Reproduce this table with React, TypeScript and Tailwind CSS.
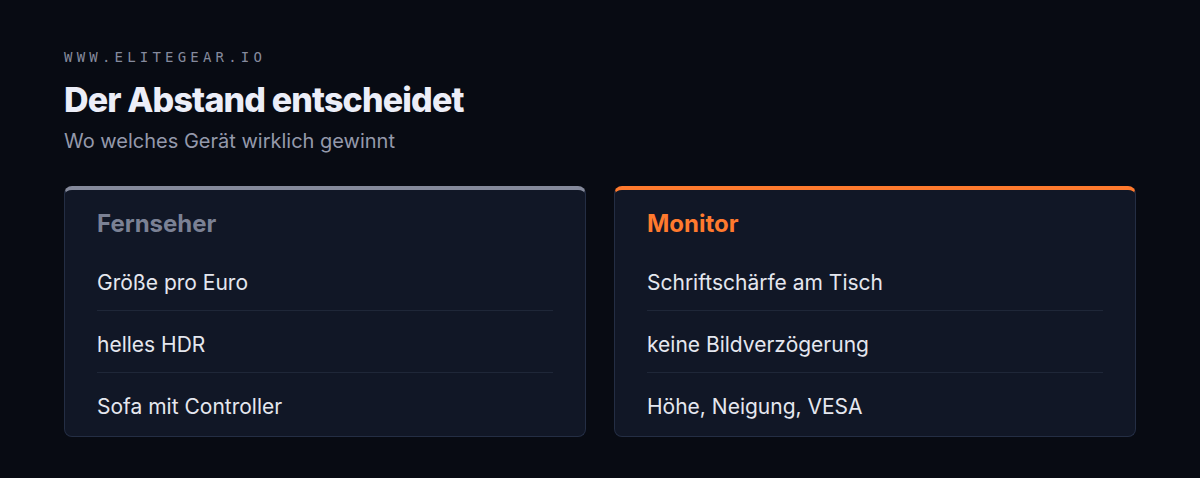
const sans = "font-['Inter','Liberation_Sans',sans-serif]"

interface Side {
  title: string
  accent: string
  titleColor: string
  items: string[]
}

const sides: Side[] = [
  {
    title: "Fernseher",
    accent: "border-t-[#858a9c]",
    titleColor: "text-[#7b8194]",
    items: ["Größe pro Euro", "helles HDR", "Sofa mit Controller"],
  },
  {
    title: "Monitor",
    accent: "border-t-[#ff7a2e]",
    titleColor: "text-[#ff7a2e]",
    items: ["Schriftschärfe am Tisch", "keine Bildverzögerung", "Höhe, Neigung, VESA"],
  },
]

function SideCard({ side }: { side: Side }) {
  return (
    <div
      className={`rounded-lg border border-[#242e44] border-t-4 ${side.accent} bg-[#111726] px-8 pt-[18px] pb-[15px]`}
    >
      <h2 className={`text-[24px] leading-8 font-bold ${side.titleColor}`}>{side.title}</h2>
      <ul className="mt-[29px]">
        {side.items.map((item, i) => (
          <li
            key={item}
            className={
              i < side.items.length - 1
                ? "text-[21px] leading-7 text-[#e5e7ef] pb-[13px] mb-[20px] border-b border-[#1f2738]"
                : "text-[21px] leading-7 text-[#e5e7ef]"
            }
          >
            {item}
          </li>
        ))}
      </ul>
    </div>
  )
}

export default function App() {
  return (
    <div className={`${sans} min-h-[478px] bg-[#080b13] px-16 pt-[49px] pb-10`}>
      <div className="font-['DejaVu_Sans_Mono','Liberation_Mono',monospace] text-[14px] leading-4 tracking-[0.3em] text-[#858a9d]">
        WWW.ELITEGEAR.IO
      </div>
      <h1 className="mt-[15px] text-[34px] leading-10 font-extrabold tracking-[-0.025em] text-[#eceef8]">
        Der Abstand entscheidet
      </h1>
      <p className="mt-[7px] text-[20px] leading-7 text-[#9499ab]">Wo welches Gerät wirklich gewinnt</p>
      <div className="mt-[31px] grid grid-cols-2 gap-7">
        {sides.map((s) => (
          <SideCard key={s.title} side={s} />
        ))}
      </div>
    </div>
  )
}
